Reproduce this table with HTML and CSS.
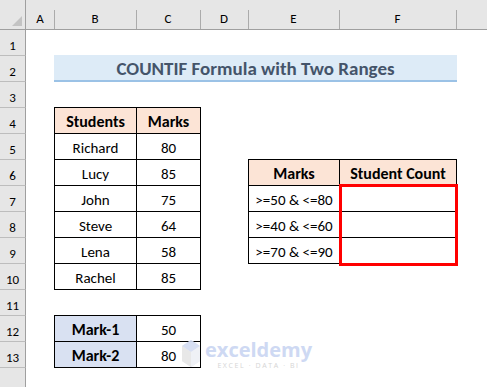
FILE: index.html
```html
<!DOCTYPE html>
<html>
<head>
<meta charset="utf-8">
<link rel="stylesheet" href="styles.css">
</head>
<body>
<div class="sheet">
  <div class="corner"><svg width="26" height="30" viewBox="0 0 26 30"><polygon points="22,16 22,26 12,26" fill="#c3c3c3"/></svg></div>
  <div class="ch cha">A</div>
  <div class="ch">B</div>
  <div class="ch">C</div>
  <div class="ch">D</div>
  <div class="ch">E</div>
  <div class="ch">F</div>
  <div class="ch"></div>

  <div class="rh first">1</div>
  <div class="rh">2</div>
  <div class="rh">3</div>
  <div class="rh">4</div>
  <div class="rh">5</div>
  <div class="rh">6</div>
  <div class="rh">7</div>
  <div class="rh">8</div>
  <div class="rh">9</div>
  <div class="rh">10</div>
  <div class="rh">11</div>
  <div class="rh">12</div>
  <div class="rh">13</div>
  <div class="rh"></div>

  <div class="title">COUNTIF Formula with Two Ranges</div>

  <div class="tbl students">
    <div class="c hd">Students</div><div class="c hd">Marks</div>
    <div class="c">Richard</div><div class="c">80</div>
    <div class="c">Lucy</div><div class="c">85</div>
    <div class="c">John</div><div class="c">75</div>
    <div class="c">Steve</div><div class="c">64</div>
    <div class="c">Lena</div><div class="c">58</div>
    <div class="c">Rachel</div><div class="c">85</div>
  </div>

  <div class="tbl counts">
    <div class="c hd">Marks</div><div class="c hd">Student Count</div>
    <div class="c">&gt;=50 &amp; &lt;=80</div><div class="c"></div>
    <div class="c">&gt;=40 &amp; &lt;=60</div><div class="c"></div>
    <div class="c">&gt;=70 &amp; &lt;=90</div><div class="c"></div>
  </div>
  <div class="redbox"></div>

  <div class="tbl marks">
    <div class="c lab">Mark-1</div><div class="c">50</div>
    <div class="c lab">Mark-2</div><div class="c">80</div>
  </div>

  <div class="watermark">
    <svg class="wm-icon" width="20" height="30" viewBox="0 0 20 30">
      <polygon points="10,1 19,7 19,22 10,28 1,22 1,7" fill="#e4e8f3"/>
      <polygon points="10,1 19,7 10,13 1,7" fill="#d3dcf2"/>
      <polygon points="1,7 10,13 10,28 1,22" fill="#e6e6e6"/>
      <polygon points="10,13 19,7 19,22 10,28" fill="#eef0f6"/>
    </svg>
    <div class="wm-text">
      <div class="wm-name">exceldemy</div>
      <div class="wm-tag">EXCEL · DATA · BI</div>
    </div>
  </div>
</div>
</body>
</html>
```
FILE: styles.css
```css
html, body {
  margin: 0;
  padding: 0;
  background: #fff;
  overflow: hidden;
}
body {
  width: 487px;
  height: 387px;
  font-family: Carlito, Calibri, Lato, "Liberation Sans", sans-serif;
  color: #000;
}
.sheet {
  position: relative;
  display: grid;
  grid-template-columns: 26px 28px 82px 64px 48px 91px 117px 31px;
  grid-template-rows: 30px 25px repeat(12, 26px) 20px;
  width: 487px;
  height: 387px;
  overflow: hidden;
}
.corner {
  background: #e6e6e6;
  border-right: 1px solid #9f9f9f;
  border-bottom: 1px solid #9f9f9f;
  box-sizing: border-box;
}
.corner svg { display: block; }
.ch {
  background: linear-gradient(#ababab, #ababab) left bottom / 1px 19px no-repeat, #e6e6e6;
  border-bottom: 1px solid #9f9f9f;
  box-sizing: border-box;
  display: flex;
  align-items: flex-end;
  justify-content: center;
  padding-bottom: 4px;
  font-size: 13px;
  line-height: 13px;
}
.cha { background: #e6e6e6; }
.rh {
  grid-column: 1;
  background: #e6e6e6;
  border-right: 1px solid #9f9f9f;
  border-top: 1px solid #bdbdbd;
  box-sizing: border-box;
  display: flex;
  align-items: flex-end;
  justify-content: center;
  padding-bottom: 3px;
  font-size: 13px;
  line-height: 13px;
}
.rh.first { border-top: none; }

.title {
  grid-row: 3;
  grid-column: 3 / 8;
  margin-right: -1px;
  margin-bottom: -1px;
  background: #ddebf7;
  border-bottom: 2px solid #9bc2e6;
  display: flex;
  align-items: center;
  justify-content: center;
  padding-top: 1px;
  font-weight: bold;
  font-size: 19px;
  color: #44546a;
}

.tbl {
  display: grid;
  grid-auto-rows: 26px;
  border-right: 1px solid #000;
  border-bottom: 1px solid #000;
  margin-right: -1px;
  margin-bottom: -1px;
}
.students {
  grid-row: 5 / 12;
  grid-column: 3 / 5;
  grid-template-columns: 82px 64px;
}
.counts {
  grid-row: 7 / 11;
  grid-column: 6 / 8;
  grid-template-columns: 91px 117px;
}
.marks {
  grid-row: 13 / 15;
  grid-column: 3 / 5;
  grid-template-columns: 82px 64px;
  grid-template-rows: 26px 26px;
}
.c {
  border-left: 1px solid #000;
  border-top: 1px solid #000;
  display: flex;
  align-items: center;
  justify-content: center;
  padding-top: 2px;
  box-sizing: border-box;
  font-size: 15px;
  white-space: nowrap;
}
.hd {
  background: #fce4d6;
  font-weight: bold;
  font-size: 16px;
}
.lab {
  background: #d9e1f2;
  font-weight: bold;
  font-size: 16px;
}
.redbox {
  grid-row: 8 / 11;
  grid-column: 7 / 8;
  margin: -1px -2px -3px 0;
  border: 3px solid #ff0000;
  pointer-events: none;
}

.watermark {
  position: absolute;
  left: 181px;
  top: 339px;
  display: flex;
  align-items: flex-start;
  gap: 4px;
  opacity: 0.9;
}
.wm-icon { display: block; }
.wm-text {
  display: flex;
  flex-direction: column;
  align-items: center;
}
.wm-name {
  font-family: "Open Sans", Lato, sans-serif;
  font-weight: bold;
  font-size: 20px;
  line-height: 21px;
  color: #c9d5f2;
}
.wm-tag {
  font-family: "Open Sans", Lato, sans-serif;
  font-size: 7px;
  line-height: 8px;
  margin-top: 2px;
  color: #d2d2d2;
  letter-spacing: 1.6px;
}
```
